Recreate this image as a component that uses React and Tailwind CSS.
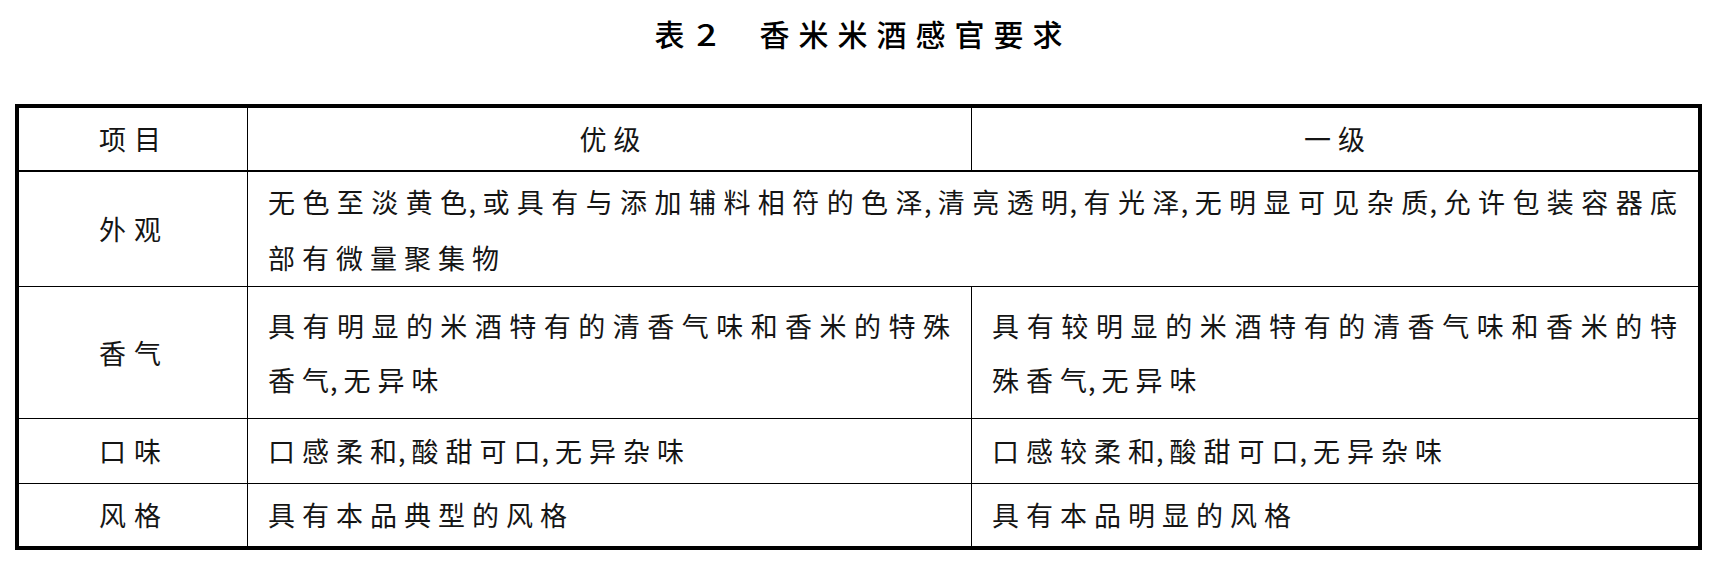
import React from "react";

function T({ text }) {
  const parts = text.split(",");
  const out = [];
  parts.forEach((p, i) => {
    if (i < parts.length - 1 && p.length > 0) {
      const chars = Array.from(p);
      const last = chars.pop();
      out.push(<React.Fragment key={"p" + i}>{chars.join("")}</React.Fragment>);
      out.push(
        <span key={"l" + i} className="tracking-[1px]">
          {last}
        </span>
      );
      out.push(
        <span key={"c" + i} className="tracking-[6px]">
          ,
        </span>
      );
    } else {
      out.push(<React.Fragment key={"p" + i}>{p}</React.Fragment>);
    }
  });
  return out;
}

function Label({ children, border = "border-b" }) {
  return (
    <div className={`flex items-center justify-center border-r border-black ${border}`}>
      <span className="tracking-[8px] pl-[2px]">{children}</span>
    </div>
  );
}

function Text({ lines, className = "" }) {
  return (
    <div className={`flex flex-col justify-center pl-[20px] pr-[14px] ${className}`}>
      {lines.map((l, i) => (
        <div
          key={i}
          className={
            i < lines.length - 1
              ? "whitespace-nowrap text-justify [text-align-last:justify]"
              : "whitespace-nowrap"
          }
        >
          <T text={l} />
        </div>
      ))}
    </div>
  );
}

export default function App() {
  return (
    <div className="w-[1717px] h-[571px] bg-white text-[#151515] font-['Noto_Sans_CJK_SC',sans-serif]">
      <div className="h-[67px] flex items-center justify-center text-[30px] font-medium text-black">
        <span>表</span>
        <span className="ml-[14px] scale-x-[1.2]">2</span>
        <span className="ml-[44px] tracking-[9px] mr-[-9px]">香米米酒感官要求</span>
      </div>
      <div className="mt-[37px] mx-[15px] border-4 border-black grid grid-cols-[229px_724px_1fr] grid-rows-[64px_115px_132px_65px_62px] text-[27px] tracking-[7px] leading-[56px]">
        {/* header */}
        <div className="flex items-center justify-center border-r border-b-2 border-black">
          <span className="tracking-[8px] pl-[2px]">项目</span>
        </div>
        <div className="flex items-center justify-center border-r border-b-2 border-black">
          <span className="pl-[8px]">优级</span>
        </div>
        <div className="flex items-center justify-center border-b-2 border-black">
          <span className="pl-[6px]">一级</span>
        </div>

        {/* 外观 */}
        <Label>外观</Label>
        <Text
          className="col-span-2 border-b border-black pt-[2px]"
          lines={[
            "无色至淡黄色,或具有与添加辅料相符的色泽,清亮透明,有光泽,无明显可见杂质,允许包装容器底",
            "部有微量聚集物",
          ]}
        />

        {/* 香气 */}
        <Label>香气</Label>
        <Text
          className="border-r border-b border-black leading-[54px]"
          lines={["具有明显的米酒特有的清香气味和香米的特殊", "香气,无异味"]}
        />
        <Text
          className="border-b border-black leading-[54px]"
          lines={["具有较明显的米酒特有的清香气味和香米的特", "殊香气,无异味"]}
        />

        {/* 口味 */}
        <Label>口味</Label>
        <Text className="border-r border-b border-black" lines={["口感柔和,酸甜可口,无异杂味"]} />
        <Text className="border-b border-black" lines={["口感较柔和,酸甜可口,无异杂味"]} />

        {/* 风格 */}
        <Label border="">风格</Label>
        <Text className="border-r border-black" lines={["具有本品典型的风格"]} />
        <Text lines={["具有本品明显的风格"]} />
      </div>
    </div>
  );
}
